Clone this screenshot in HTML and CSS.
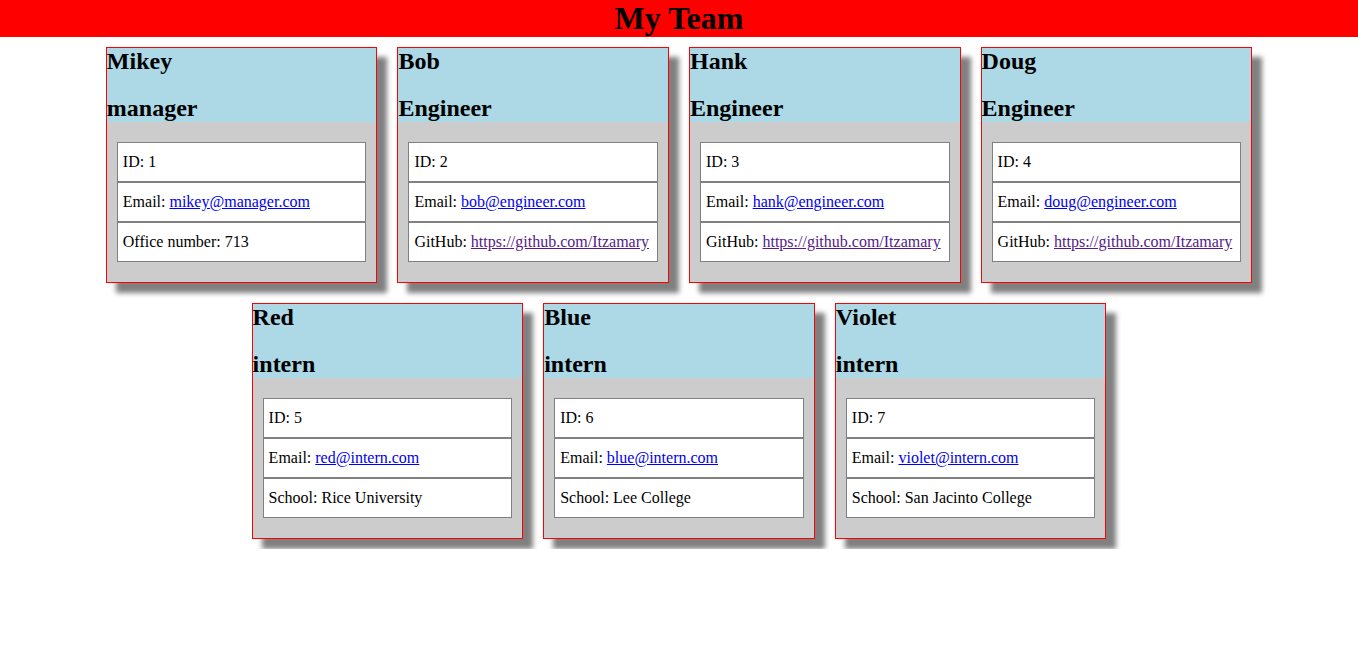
FILE: index.html
```html
<!DOCTYPE html>
<html>
<head>
    <link rel="stylesheet" href="styles.css">
</head>
<body>
    <header class="team-header">
        <h1>My Team</h1>
    </header>
    <main class="team">
        <div class="card">
            <div class="card-head">
                <h2>Mikey</h2>
                <h2>manager</h2>
            </div>
            <div class="card-body">
                <ul class="info">
                    <li>ID: 1</li>
                    <li>Email: <a href="mailto:mikey@manager.com">mikey@manager.com</a></li>
                    <li>Office number: 713</li>
                </ul>
            </div>
        </div>
        <div class="card">
            <div class="card-head">
                <h2>Bob</h2>
                <h2>Engineer</h2>
            </div>
            <div class="card-body">
                <ul class="info">
                    <li>ID: 2</li>
                    <li>Email: <a href="mailto:bob@engineer.com">bob@engineer.com</a></li>
                    <li>GitHub: <a class="visited" href="#">https://github.com/Itzamary</a></li>
                </ul>
            </div>
        </div>
        <div class="card">
            <div class="card-head">
                <h2>Hank</h2>
                <h2>Engineer</h2>
            </div>
            <div class="card-body">
                <ul class="info">
                    <li>ID: 3</li>
                    <li>Email: <a href="mailto:hank@engineer.com">hank@engineer.com</a></li>
                    <li>GitHub: <a class="visited" href="#">https://github.com/Itzamary</a></li>
                </ul>
            </div>
        </div>
        <div class="card">
            <div class="card-head">
                <h2>Doug</h2>
                <h2>Engineer</h2>
            </div>
            <div class="card-body">
                <ul class="info">
                    <li>ID: 4</li>
                    <li>Email: <a href="mailto:doug@engineer.com">doug@engineer.com</a></li>
                    <li>GitHub: <a class="visited" href="#">https://github.com/Itzamary</a></li>
                </ul>
            </div>
        </div>
        <div class="card">
            <div class="card-head">
                <h2>Red</h2>
                <h2>intern</h2>
            </div>
            <div class="card-body">
                <ul class="info">
                    <li>ID: 5</li>
                    <li>Email: <a href="mailto:red@intern.com">red@intern.com</a></li>
                    <li>School: Rice University</li>
                </ul>
            </div>
        </div>
        <div class="card">
            <div class="card-head">
                <h2>Blue</h2>
                <h2>intern</h2>
            </div>
            <div class="card-body">
                <ul class="info">
                    <li>ID: 6</li>
                    <li>Email: <a href="mailto:blue@intern.com">blue@intern.com</a></li>
                    <li>School: Lee College</li>
                </ul>
            </div>
        </div>
        <div class="card">
            <div class="card-head">
                <h2>Violet</h2>
                <h2>intern</h2>
            </div>
            <div class="card-body">
                <ul class="info">
                    <li>ID: 7</li>
                    <li>Email: <a href="mailto:violet@intern.com">violet@intern.com</a></li>
                    <li>School: San Jacinto College</li>
                </ul>
            </div>
        </div>
    </main>
</body>
</html>
```

FILE: styles.css
```css
body {
    margin: 0;
    font-family: "Liberation Serif", "Times New Roman", serif;
    font-size: 16px;
    color: #000;
    background: #fff;
}
.team-header {
    background: red;
    text-align: center;
}
.team-header h1 {
    margin: 0;
    font-size: 32px;
    line-height: 37px;
}
.team {
    display: flex;
    flex-wrap: wrap;
    justify-content: center;
    padding-top: 0;
}
.card {
    box-sizing: border-box;
    flex: 0 0 20%;
    margin: 10px;
    border: 1px solid red;
    background: #ccc;
    box-shadow: 10px 10px 5px grey;
}
.card-head {
    background: lightblue;
}
.card-head h2 {
    margin: 0;
    font-size: 24px;
    line-height: 27px;
}
.card-head h2 + h2 {
    margin-top: 20px;
}
.card-body {
    padding: 20px 10px;
}
.info {
    list-style: none;
    margin: 0;
    padding: 0;
}
.info li {
    background: #fff;
    border: 1px solid grey;
    padding: 10px 5px;
    line-height: 18px;
}
a {
    color: #0000ee;
}
a.visited {
    color: #551a8b;
}
```
